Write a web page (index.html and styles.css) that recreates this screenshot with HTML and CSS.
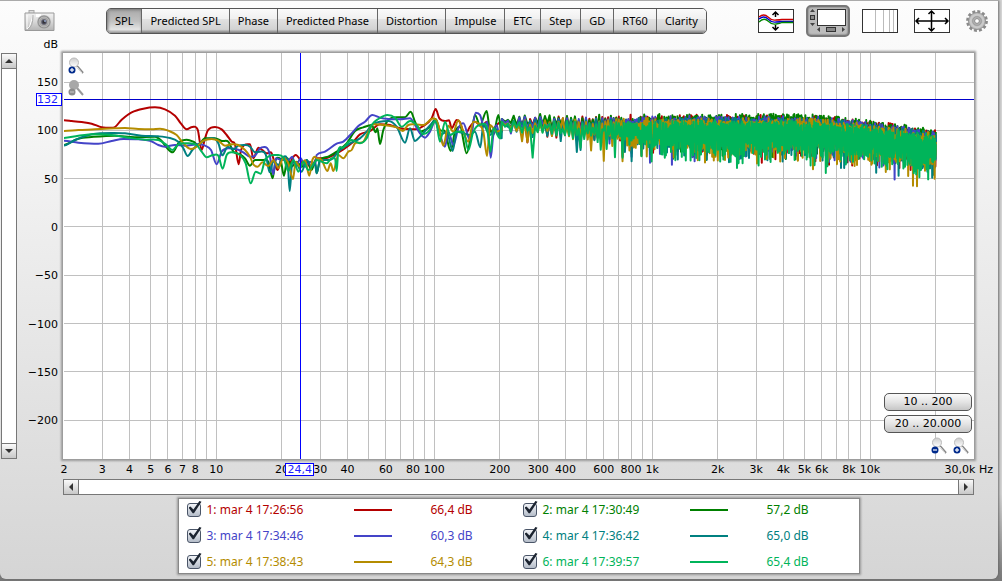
FILE: index.html
```html
<!DOCTYPE html>
<html lang="it">
<head>
    <meta charset="UTF-8">
    <meta name="viewport" content="width=device-width, initial-scale=1.0">
    <title>SPL</title>
    <link rel="stylesheet" href="styles.css">
</head>
<body>
    <div class="window">
        <header class="toolbar">
            <button class="icon-button camera" aria-label="Capture">
                <svg width="31" height="22" viewBox="0 0 31 22">
                    <defs>
                        <linearGradient id="cam" x1="0" y1="0" x2="0" y2="1"><stop offset="0" stop-color="#f2f2f2"/><stop offset=".5" stop-color="#d8d8d8"/><stop offset="1" stop-color="#b4b4b4"/></linearGradient>
                        <radialGradient id="lens"><stop offset="0" stop-color="#222"/><stop offset=".3" stop-color="#556"/><stop offset=".5" stop-color="#aaa"/><stop offset=".8" stop-color="#888"/><stop offset="1" stop-color="#bbb"/></radialGradient>
                    </defs>
                    <rect x="5" y="0.5" width="5" height="3" fill="#ddd" stroke="#aaa"/>
                    <path d="M1 3H30V20.500H1Z" fill="url(#cam)" stroke="#999"/>
                    <path d="M3 5V19Q6 18 7 12L9 5" fill="none" stroke="#fff"/>
                    <path d="M9 5Q9 17 4 19" fill="none" stroke="#aaa"/>
                    <rect x="12" y="4" width="5" height="3" fill="#fff"/>
                    <circle cx="20" cy="12" r="7" fill="url(#lens)"/>
                    <circle cx="20" cy="12" r="5" fill="none" stroke="#ccc" stroke-width=".8"/>
                    <circle cx="21" cy="11" r="1" fill="#9ac"/>
                </svg>
            </button>
            <nav class="tabs">
                <button class="tab active">SPL</button>
                <button class="tab">Predicted SPL</button>
                <button class="tab">Phase</button>
                <button class="tab">Predicted Phase</button>
                <button class="tab">Distortion</button>
                <button class="tab">Impulse</button>
                <button class="tab">ETC</button>
                <button class="tab">Step</button>
                <button class="tab">GD</button>
                <button class="tab">RT60</button>
                <button class="tab">Clarity</button>
            </nav>
            <div class="tools">
                <button class="icon-button" aria-label="Separate traces">
                    <svg width="36" height="24" viewBox="0 0 36 24">
                        <rect x=".5" y=".5" width="35" height="23" fill="#fff" stroke="#333"/>
                        <path d="M17.500 3V8M17.500 16V21M14.500 6L17.500 3L20.500 6M14.500 18L17.500 21L20.500 18" fill="none" stroke="#000" stroke-width="1.500"/>
                        <path d="M1 8Q6 4 10 8T18 11Q22 11 24 10.500H35" fill="none" stroke="#c00" stroke-width="1.300"/>
                        <path d="M1 10Q6 6 10 10T18 13Q22 13 24 12.500H35" fill="none" stroke="#00c" stroke-width="1.300"/>
                        <path d="M1 13Q6 8 10 12T18 15Q22 14.500 24 13.500H35" fill="none" stroke="#080" stroke-width="1.300"/>
                    </svg>
                </button>
                <button class="icon-button pressed" aria-label="Scrollbars">
                    <svg width="40" height="28" viewBox="0 0 40 28">
                        <rect x="9.500" y="2.500" width="28" height="16" fill="#fff" stroke="#333"/>
                        <path d="M2 5L4.500 2L7 5ZM2 16H7L4.500 19Z" fill="#444"/>
                        <rect x="2.500" y="8.500" width="4" height="4" fill="#888" stroke="#333"/>
                        <path d="M12 20V25L9 22.500ZM34 20V25L37 22.500Z" fill="#444"/>
                        <rect x="18.500" y="20.500" width="9" height="4" fill="#888" stroke="#333"/>
                    </svg>
                </button>
                <button class="icon-button" aria-label="Grid">
                    <svg width="36" height="24" viewBox="0 0 36 24">
                        <rect x=".5" y=".5" width="35" height="23" fill="#fff" stroke="#333"/>
                        <path d="M13.500 1V23M21.500 1V23M27.500 1V23M31.500 1V23" stroke="#bbb"/>
                    </svg>
                </button>
                <button class="icon-button" aria-label="Graph limits">
                    <svg width="36" height="24" viewBox="0 0 36 24">
                        <rect x=".5" y=".5" width="35" height="23" fill="#fff" stroke="#333"/>
                        <path d="M17.500 2V22M2 12H34M14.500 5L17.500 2L20.500 5M14.500 19L17.500 22L20.500 19M5 9L2 12L5 15M31 9L34 12L31 15" fill="none" stroke="#000" stroke-width="1.500"/>
                    </svg>
                </button>
                <button class="icon-button" aria-label="Controls">
                    <svg width="22" height="22" viewBox="-11 -11 22 22">
                        <circle r="9.300" fill="none" stroke="#8a8a8a" stroke-width="3.200" stroke-dasharray="2.870 2"/>
                        <circle r="8.600" fill="#b4b4b4" stroke="#8c8c8c" stroke-width=".8"/>
                        <circle r="6.300" fill="none" stroke="#cacaca" stroke-width="2"/>
                        <circle r="4.200" fill="#bbb" stroke="#999"/>
                        <circle r="2.400" fill="#fff" stroke="#888"/>
                    </svg>
                </button>
            </div>
        </header>

        <div class="vscroll">
            <button aria-label="Scroll up"><i class="arrow up"></i></button>
            <button aria-label="Scroll down"><i class="arrow down"></i></button>
        </div>

        <main class="plot">
            <svg class="graph" id="graph">
                <g id="grid"></g>
                <svg id="traces" width="100%" height="100%" viewBox="192 159 2730 1218" preserveAspectRatio="none"></svg>
                <g id="axes"></g>
            </svg>
            <div class="zoom zoom-y">
                <button class="icon-button" aria-label="Zoom in vertical">
                    <svg width="16" height="18" viewBox="0 0 16 18"><use href="#glass"/><use href="#plus"/></svg>
                </button>
                <button class="icon-button" aria-label="Zoom out vertical" disabled>
                    <svg width="16" height="18" viewBox="0 0 16 18">
                        <path d="M9 9L15 16" stroke="#999" stroke-width="2"/>
                        <circle cx="6" cy="6" r="5" fill="#a8a8a8"/>
                        <circle cx="4" cy="13" r="3.500" fill="#8c8c8c"/>
                        <path d="M2 13H6" stroke="#ccc"/>
                    </svg>
                </button>
            </div>
            <div class="zoom zoom-x">
                <button class="range">10 .. 200</button>
                <button class="range">20 .. 20.000</button>
                <div class="zoom-pair">
                    <button class="icon-button" aria-label="Zoom out horizontal">
                        <svg width="16" height="18" viewBox="0 0 16 18"><use href="#glass"/><use href="#minus"/></svg>
                    </button>
                    <button class="icon-button" aria-label="Zoom in horizontal">
                        <svg width="16" height="18" viewBox="0 0 16 18"><use href="#glass"/><use href="#plus"/></svg>
                    </button>
                </div>
            </div>
        </main>

        <div class="hscroll">
            <button aria-label="Scroll left"><i class="arrow left"></i></button>
            <button aria-label="Scroll right"><i class="arrow right"></i></button>
        </div>

        <footer class="legend">
            <div class="trace red">
                <label><input type="checkbox" checked>1: mar 4 17:26:56</label>
                <span class="swatch"></span><span>66,4 dB</span>
            </div>
            <div class="trace green">
                <label><input type="checkbox" checked>2: mar 4 17:30:49</label>
                <span class="swatch"></span><span>57,2 dB</span>
            </div>
            <div class="trace blue">
                <label><input type="checkbox" checked>3: mar 4 17:34:46</label>
                <span class="swatch"></span><span>60,3 dB</span>
            </div>
            <div class="trace teal">
                <label><input type="checkbox" checked>4: mar 4 17:36:42</label>
                <span class="swatch"></span><span>65,0 dB</span>
            </div>
            <div class="trace gold">
                <label><input type="checkbox" checked>5: mar 4 17:38:43</label>
                <span class="swatch"></span><span>64,3 dB</span>
            </div>
            <div class="trace emerald">
                <label><input type="checkbox" checked>6: mar 4 17:39:57</label>
                <span class="swatch"></span><span>65,4 dB</span>
            </div>
        </footer>
    </div>

    <!-- shared icon parts -->
    <svg class="symbols" width="0" height="0">
        <defs>
            <linearGradient id="glassFill" x1="0" y1="0" x2="0" y2="1"><stop offset="0" stop-color="#ccc"/><stop offset="1" stop-color="#fff"/></linearGradient>
            <g id="glass">
                <path d="M9 9L15 16" stroke="#888" stroke-width="2"/>
                <path d="M9 10L14 16" stroke="#eee"/>
                <circle cx="6" cy="5.500" r="4.500" fill="url(#glassFill)" stroke="#bbb"/>
            </g>
            <g id="minus"><circle cx="4" cy="13" r="3.500" fill="#002a8c"/><path d="M2 13H6" stroke="#fff" stroke-width="1.200"/></g>
            <g id="plus"><use href="#minus"/><path d="M4 11V15" stroke="#fff" stroke-width="1.200"/></g>
        </defs>
    </svg>
    <script src="graph.js"></script>
</body>
</html>
```

FILE: styles.css
```css
* {
    margin: 0;
    padding: 0;
    box-sizing: border-box;
}

body {
    font-family: "Noto Sans", "DejaVu Sans", sans-serif;
    font-size: 12px;
    line-height: 16px;
    min-height: 100vh;
    display: flex;
    padding: 0 4px 2px 0;
    background: linear-gradient(to bottom, #d8d8d8 85%, #777 100%);
}

button {
    font: inherit;
    color: #000;
}

.window {
    flex: 1;
    display: grid;
    grid-template-columns: 17px 46px minmax(0, 1fr) 24px;
    grid-template-rows: 52px minmax(300px, 1fr) 20px 16px auto;
    border-top: 1px solid #aaa;
    border-radius: 0 0 6px 6px;
    background: linear-gradient(to bottom, #fcfcfc, #f6f6f6 20%, #d5d5d5);
    box-shadow: 1px 0 3px #666;
}

/* toolbar */
.toolbar {
    grid-column: 1 / -1;
    display: flex;
    align-items: flex-start;
    padding: 4px 10px 0 24px;
}

.icon-button {
    display: flex;
    align-items: center;
    justify-content: center;
    border: none;
    background: none;
}

.camera {
    height: 32px;
    margin-right: 51px;
}

.tabs {
    display: flex;
    height: 26px;
    margin-top: 3px;
    border: 1px solid #555;
    border-radius: 5px;
    overflow: hidden;
}

.tab {
    padding: 0 8px;
    font-size: 11px;
    border: none;
    border-right: 1px solid #666;
    background: linear-gradient(to bottom, #fafafa, #f0f0f0 40%, #e2e2e2 42%, #d2d2d2 85%, #777);
}

.tab:last-child {
    border-right: none;
}

.tab.active {
    background: linear-gradient(to bottom, #aaa, #c0c0c0 50%, #e4e4e4 85%, #999);
    box-shadow: inset 1px 1px 3px #777;
}

.tools {
    display: flex;
    align-items: center;
    gap: 16px;
    height: 32px;
    margin-left: auto;
}

.pressed {
    width: 44px;
    height: 32px;
    margin: 0 -4px;
    border: 2px solid #777;
    border-radius: 5px;
    background: #bdbdbd;
    box-shadow: inset 0 0 2px #555;
}

/* scrollbars */
.vscroll,
.hscroll {
    display: flex;
    justify-content: space-between;
    border: 1px solid #777;
    background: #fff;
}

.vscroll {
    grid-column: 1;
    grid-row: 2;
    flex-direction: column;
    margin-left: 1px;
}

.hscroll {
    grid-column: 3;
    grid-row: 4;
}

.vscroll button,
.hscroll button {
    display: flex;
    align-items: center;
    justify-content: center;
    width: 14px;
    height: 14px;
    border: none;
    background: linear-gradient(to bottom, #fafafa, #c8c8c8);
    outline: 1px solid #777;
}

.arrow {
    border: 4px solid transparent;
}

.up {
    border-top: none;
    border-bottom-color: #333;
}

.down {
    border-bottom: none;
    border-top-color: #333;
}

.left {
    border-left: none;
    border-right-color: #333;
}

.right {
    border-right: none;
    border-left-color: #333;
}

/* graph */
.plot {
    grid-column: 3;
    grid-row: 2;
    position: relative;
    padding-left: 1px;
    background: #fff;
    box-shadow: 0 0 2px 2px #999;
}

.graph {
    display: block;
    width: 100%;
    height: 100%;
    overflow: visible;
}

.graph text {
    font-family: "DejaVu Sans", sans-serif;
    font-size: 11px;
}

.grid-line {
    stroke: #c0c0c0;
    shape-rendering: crispEdges;
}

.cursor-line {
    stroke: #00f;
    shape-rendering: crispEdges;
}

.level-line {
    stroke: #00c;
    shape-rendering: crispEdges;
}

.cursor-box {
    fill: #fff;
    stroke: #00f;
    shape-rendering: crispEdges;
}

.graph .cursor-text {
    fill: #22f;
}

.curve {
    fill: none;
    stroke-width: 2px;
    stroke-linejoin: round;
    vector-effect: non-scaling-stroke;
}

.zoom {
    position: absolute;
    display: flex;
    flex-direction: column;
}

.zoom-y {
    top: 4px;
    left: 5px;
    gap: 4px;
}

.zoom-x {
    right: 2px;
    bottom: 4px;
    gap: 4px;
}

.zoom-pair {
    display: flex;
    justify-content: flex-end;
    gap: 6px;
    padding-right: 3px;
}

.range {
    width: 88px;
    height: 18px;
    font: 11px/14px "DejaVu Sans", sans-serif;
    border: 1px solid #555;
    border-radius: 5px;
    background: linear-gradient(to bottom, #fafafa, #e4e4e4 50%, #c6c6c6);
}

/* legend */
.legend {
    grid-column: 3;
    grid-row: 5;
    justify-self: center;
    display: grid;
    grid-template-columns: 336px 336px;
    row-gap: 4px;
    margin: 3px 0 5px;
    padding: 0 0 0 8px;
    background: #fff;
    border: 1px solid #888;
    box-shadow: 0 0 2px 1px #999;
}

.trace {
    display: flex;
    align-items: center;
    height: 22px;
}

.trace label {
    display: flex;
    align-items: center;
    gap: 6px;
    width: 167px;
}

.trace input {
    appearance: none;
    position: relative;
    width: 14px;
    height: 14px;
    border: 1px solid #4a5568;
    border-radius: 3px;
    background: linear-gradient(to bottom, #f2f4f8, #b4bcc8);
}

.trace input:checked::after {
    content: "";
    position: absolute;
    left: 1px;
    top: -3px;
    width: 13px;
    height: 13px;
    background: #1c2430;
    clip-path: polygon(0 50%, 15% 42%, 38% 66%, 84% 0, 100% 5%, 42% 95%, 32% 95%);
}

.swatch {
    width: 38px;
    height: 2px;
    margin-right: 39px;
    background: currentColor;
}

.red { color: #b40000; }
.green { color: #008000; }
.blue { color: #4444c8; }
.teal { color: #008080; }
.gold { color: #b48c00; }
.emerald { color: #00b45a; }

.curve.red { stroke: #b40000; }
.curve.green { stroke: #008000; }
.curve.blue { stroke: #4444c8; }
.curve.teal { stroke: #008080; }
.curve.gold { stroke: #b48c00; }
.curve.emerald { stroke: #00b45a; }

.symbols {
    position: absolute;
}
```

FILE: graph.js
```javascript
const NS = 'http://www.w3.org/2000/svg';
const F_MIN = 2, F_MAX = 30000, DB_TOP = 180, DB_BOTTOM = -240;

const xPos = f => (Math.log10(f / F_MIN) / Math.log10(F_MAX / F_MIN) * 100).toFixed(3) + '%';
const yPos = db => ((DB_TOP - db) / (DB_TOP - DB_BOTTOM) * 100).toFixed(3) + '%';

function add(parent, tag, attrs, text) {
    const el = document.createElementNS(NS, tag);
    for (const key in attrs) el.setAttribute(key, attrs[key]);
    if (text) el.textContent = text;
    parent.appendChild(el);
    return el;
}

const grid = document.getElementById('grid');
const axes = document.getElementById('axes');
const traces = document.getElementById('traces');

// Grid lines
for (let decade = 1; decade <= 10000; decade *= 10) {
    for (let n = 1; n < 10; n++) {
        const f = n * decade;
        if (f <= F_MIN || f > 20000) continue;
        add(grid, 'line', { class: 'grid-line', x1: xPos(f), x2: xPos(f), y1: 0, y2: '100%' });
    }
}
for (let db = 150; db >= -200; db -= 50) {
    add(grid, 'line', { class: 'grid-line', x1: 0, x2: '100%', y1: yPos(db), y2: yPos(db) });
    add(axes, 'text', { x: -6, y: yPos(db), dy: 4, 'text-anchor': 'end' }, String(db).replace('-', '\u2212'));
}

// Axis labels
[2, 3, 4, 5, 6, 7, 8, 10, 20, 30, 40, 60, 80, 100, 200, 300, 400, 600, 800,
    1000, 2000, 3000, 4000, 5000, 6000, 8000, 10000].forEach(f => {
    const label = f >= 1000 ? f / 1000 + 'k' : String(f);
    add(axes, 'text', { x: xPos(f), y: '100%', dy: 14, 'text-anchor': 'middle' }, label);
});
const unit = add(axes, 'svg', { x: '100%', y: '100%', overflow: 'visible' });
add(unit, 'text', { x: 19, y: 14, 'text-anchor': 'end' }, '30,0k Hz');
add(axes, 'text', { x: -6, y: -5, 'text-anchor': 'end' }, 'dB');

// Curves: points up to about 150 Hz, low[] and mid[] each with their own x origin
const Y0 = 285, LOW_X = 165, MID_X = 900;
const curves = [
    { name: 'red', top: 118, spread: 10,
      low: '24,76 50,78 80,81 110,86 140,97 160,98 180,96 200,74 230,52 265,41 300,37 330,43 360,62 378,86 395,103 412,96 428,104 440,165 450,130 460,104 480,96 500,103 515,120 530,140 540,148 551,208 558,165 568,150 585,148 595,190 610,158 622,165 635,175 648,172 658,200 668,225 678,195 690,190 700,215 712,190 722,180 736,195 745,215 757,200 768,222 780,198',
      mid: '50,190 75,190 100,180 130,163 160,140 180,118 210,108 240,88 270,90 300,100 320,102 345,103 375,90 395,70 407,42 418,70 435,78 447,76 455,100 470,75 480,82 495,120 510,95 525,80 545,95 560,80 575,110 590,90 603,82' },
    { name: 'green', top: 117, spread: 8,
      low: '24,150 70,131 110,126 180,122 240,127 300,125 320,138 335,158 353,172 372,142 395,134 415,140 430,150 450,130 480,130 500,138 520,140 535,170 555,178 570,190 585,212 600,195 625,195 640,200 653,250 662,195 675,190 687,242 697,190 710,215 725,200 740,215 755,195 770,225 780,200',
      mid: '50,235 60,195 85,185 110,170 140,145 165,108 190,97 215,90 227,112 232,100 240,147 250,105 265,75 290,67 315,67 332,50 345,80 360,110 375,105 390,95 407,72 420,105 435,110 452,168 465,110 480,95 500,175 515,110 525,60 540,90 560,48 568,95 580,120 595,60 605,110' },
    { name: 'blue', top: 119, spread: 10,
      low: '24,137 70,143 130,146 170,138 205,132 250,133 285,137 310,150 330,155 360,150 390,152 430,148 450,152 468,165 485,208 500,170 520,160 545,163 565,172 585,185 600,182 615,160 628,156 642,170 655,238 663,190 680,195 700,195 712,185 722,215 737,190 750,215 765,200 780,210',
      mid: '50,180 75,170 110,146 130,140 155,115 175,93 195,80 217,60 240,68 265,72 300,73 330,70 345,90 360,115 375,128 390,110 405,80 420,120 435,155 445,110 460,150 475,100 490,85 510,135 527,53 540,60 552,95 562,80 572,188 580,120 590,90 600,130' },
    { name: 'teal', top: 121, spread: 10,
      low: '24,152 60,135 110,118 170,114 210,115 260,122 310,124 345,129 370,140 385,160 398,183 412,165 430,148 455,133 475,130 490,145 502,181 518,155 535,163 550,152 572,150 585,155 600,172 615,170 632,178 644,232 655,198 670,210 685,185 698,200 704,288 712,200 725,205 740,230 755,195 770,215 780,205',
      mid: '50,235 60,195 90,195 120,165 150,145 180,130 200,110 215,90 240,80 265,78 290,95 315,143 330,100 345,138 360,125 375,108 395,85 407,75 420,120 440,110 458,168 470,110 490,115 510,120 525,110 541,157 550,90 570,120 585,100 605,130' },
    { name: 'gold', top: 121, spread: 12,
      low: '24,108 70,105 120,103 180,100 210,99 250,102 290,103 315,101 340,107 365,120 385,145 408,162 425,155 445,137 470,132 490,137 510,152 530,148 550,150 570,165 585,185 595,208 608,215 622,202 640,213 655,196 670,219 685,190 700,205 714,252 722,200 735,215 750,196 763,242 772,195 780,185',
      mid: '50,190 65,195 82,228 92,205 100,228 115,180 130,190 145,170 155,165 165,145 190,140 205,110 220,88 250,90 290,97 308,108 325,90 345,88 370,90 400,70 415,90 430,152 445,92 460,110 475,76 490,110 505,140 520,80 535,85 550,110 561,183 570,90 590,110 605,105' },
    { name: 'emerald', top: 123, spread: 11,
      low: '24,129 70,122 120,118 170,120 220,128 270,134 310,135 335,150 352,165 370,148 400,145 425,150 440,170 455,187 475,180 490,182 503,221 515,180 530,172 555,180 572,205 587,265 602,230 617,236 630,195 645,182 665,180 685,187 700,228 715,195 730,230 745,200 760,225 780,200',
      mid: '50,195 80,205 95,190 105,190 110,228 115,165 130,158 155,135 180,145 200,130 215,90 235,72 262,60 285,68 305,95 330,78 350,90 370,117 385,110 407,78 420,140 435,80 450,120 470,110 490,110 505,165 520,110 540,90 560,95 572,170 580,100 600,130' }
];

function parse(list, x0) {
    return list.split(' ').map(p => {
        const [x, y] = p.split(',').map(Number);
        return [x + x0, y + Y0];
    });
}

// Smooth path, slope is flat at every peak and dip
function smooth(pts) {
    let d = `M${pts[0]}`;
    for (let i = 1; i < pts.length; i++) {
        const a = pts[i - 1], b = pts[i];
        const before = pts[i - 2] || a, after = pts[i + 1] || b;
        const slope = (p, q, r) => (q[1] - p[1]) * (r[1] - q[1]) <= 0 ? 0 : (r[1] - p[1]) / (r[0] - p[0]);
        const h = (b[0] - a[0]) / 3;
        const ya = a[1] + slope(before, a, b) * h;
        const yb = b[1] - slope(a, b, after) * h;
        d += `C${(a[0] + h).toFixed(1)},${ya.toFixed(1)} ${(b[0] - h).toFixed(1)},${yb.toFixed(1)} ${b}`;
    }
    return d;
}

// Dense comb filtering above 200 Hz
function comb(curve, seed) {
    let s = seed;
    const rand = () => (s = (s * 16807) % 2147483647) / 2147483647;
    let d = '';
    let x = 502;
    let low = false;
    while (x < 936) {
        const t = (x - 502) / 434;
        const drop = x > 800 ? Math.pow((x - 800) / 136, 1.4) * 15 : 0;
        const spread = curve.spread * (0.7 + t * 0.4);
        const limit = 42 + t * 10;
        // troughs get a floor, so the band closes up as it gets denser
        const floor = low ? Math.min(24, 5 + t * 42) * (0.6 + rand() * 0.4) : 0;
        let dip = floor - Math.log(rand()) * spread * (low ? 0.6 : 0.3);
        // now and then a deep notch
        if (low && rand() < 0.06 - t * 0.045) dip += 12 + rand() * 18;
        dip = Math.min(dip, limit * (0.7 + rand() * 0.3));
        const ripple = (rand() - 0.6) * 6;
        const y = curve.top + drop + ripple + dip;
        d += `L${(x * 3).toFixed(1)},${(y * 3).toFixed(1)}`;
        x += Math.max(0.4, 3 - t * 6.5);
        low = !low;
    }
    return d;
}

curves.forEach((curve, i) => {
    const pts = parse(curve.low, LOW_X).concat(parse(curve.mid, MID_X));
    add(traces, 'path', { class: 'curve ' + curve.name, d: smooth(pts) + comb(curve, 7919 * (i + 3)) });
});

// Cursor
add(axes, 'line', { class: 'level-line', x1: 0, x2: '100%', y1: yPos(132), y2: yPos(132) });
add(axes, 'line', { class: 'cursor-line', x1: xPos(24.4), x2: xPos(24.4), y1: 0, y2: '100%' });

const level = add(axes, 'svg', { x: 0, y: yPos(132), overflow: 'visible' });
add(level, 'rect', { class: 'cursor-box', x: -28, y: -6, width: 25, height: 12 });
add(level, 'text', { class: 'cursor-text', x: -6, y: 4, 'text-anchor': 'end' }, '132');

const freq = add(axes, 'svg', { x: xPos(24.4), y: '100%', overflow: 'visible' });
add(freq, 'rect', { class: 'cursor-box', x: -15, y: 4, width: 28, height: 12 });
add(freq, 'text', { class: 'cursor-text', x: -1, y: 14, 'text-anchor': 'middle' }, '24,4');
```
